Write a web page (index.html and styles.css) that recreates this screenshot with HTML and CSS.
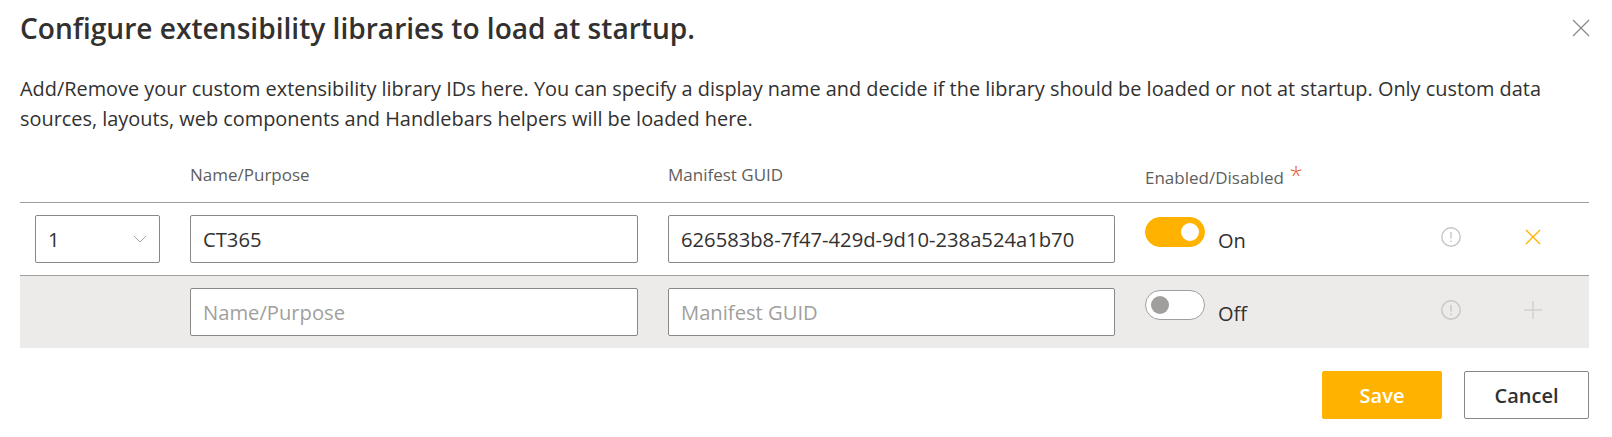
FILE: index.html
```html
<!DOCTYPE html>
<html lang="en">
<head>
    <meta charset="UTF-8">
    <title>Configure extensibility libraries</title>
    <link rel="stylesheet" href="styles.css">
</head>
<body>
    <div class="panel">
        <div class="panel-header">
            <h1>Configure extensibility libraries to load at startup.</h1>
            <button class="close-btn" aria-label="Close">
                <svg width="18" height="18" viewBox="0 0 18 18"><path d="M1 1L17 17M17 1L1 17" class="line-icon"/></svg>
            </button>
        </div>
        <p class="description">Add/Remove your custom extensibility library IDs here. You can specify a display name and decide if the library should be loaded or not at startup. Only custom data sources, layouts, web components and Handlebars helpers will be loaded here.</p>

        <div class="list">
            <div class="row head-row">
                <div></div>
                <div class="col-label">Name/Purpose</div>
                <div class="col-label">Manifest GUID</div>
                <div class="col-label col-label-low">Enabled/Disabled <span class="required">*</span></div>
            </div>

            <div class="row">
                <div class="field order-field">
                    <span>1</span>
                    <svg width="14" height="8" viewBox="0 0 14 8"><path d="M1 1L7 7L13 1" class="chevron"/></svg>
                </div>
                <input class="field" type="text" value="CT365">
                <input class="field" type="text" value="626583b8-7f47-429d-9d10-238a524a1b70">
                <div class="toggle-cell">
                    <span class="toggle on"><span class="knob"></span></span>
                    <span class="toggle-text">On</span>
                </div>
                <svg class="info" width="20" height="20" viewBox="0 0 20 20">
                    <circle cx="10" cy="10" r="9.2"/><path d="M10 5V11.5"/><path d="M10 13.5V15"/>
                </svg>
                <div class="action">
                    <svg width="16" height="16" viewBox="0 0 16 16"><path d="M1 1L15 15M15 1L1 15" class="remove-icon"/></svg>
                </div>
            </div>

            <div class="row new-row">
                <div></div>
                <input class="field" type="text" placeholder="Name/Purpose">
                <input class="field" type="text" placeholder="Manifest GUID">
                <div class="toggle-cell">
                    <span class="toggle"><span class="knob"></span></span>
                    <span class="toggle-text">Off</span>
                </div>
                <svg class="info" width="20" height="20" viewBox="0 0 20 20">
                    <circle cx="10" cy="10" r="9.2"/><path d="M10 5V11.5"/><path d="M10 13.5V15"/>
                </svg>
                <div class="action">
                    <svg width="18" height="18" viewBox="0 0 18 18"><path d="M9 0V18M0 9H18" class="add-icon"/></svg>
                </div>
            </div>
        </div>

        <div class="footer">
            <button class="btn btn-primary">Save</button>
            <button class="btn">Cancel</button>
        </div>
    </div>
</body>
</html>
```

FILE: styles.css
```css
* {
    box-sizing: border-box;
}
body {
    margin: 0;
    font-family: "Open Sans", "Noto Sans", sans-serif;
    color: #323130;
    background: #fff;
}
.panel {
    padding: 0 23px 0 20px;
}
.panel-header {
    display: flex;
    justify-content: space-between;
    align-items: center;
    height: 55px;
}
h1 {
    margin: 0;
    font-size: 28.1px;
    font-weight: 600;
}
.close-btn {
    border: none;
    background: none;
    padding: 0;
    margin-right: -1px;
    display: flex;
}
.line-icon {
    stroke: #8a8886;
    stroke-width: 1.2;
    fill: none;
}
.description {
    margin: 19px 0 0;
    font-size: 19.9px;
    line-height: 30px;
}
.list {
    margin-top: 25px;
}
.row {
    display: grid;
    grid-template-columns: 125px 448px 447px 266px 20px 84px;
    column-gap: 30px;
    padding: 12px 0 12px 15px;
    height: 73px;
    border-bottom: 1px solid #a19f9d;
}
.head-row {
    height: 44px;
    padding: 0 0 0 15px;
    align-items: start;
}
.new-row {
    height: 72px;
    background: #edebe9;
    border-bottom: none;
}
.col-label {
    font-size: 17px;
    color: #605e5c;
    line-height: 24px;
    margin-top: 4px;
}
.col-label-low {
    margin-top: 7px;
}
.required {
    color: #e8603c;
    font-size: 24px;
    font-weight: 300;
    line-height: 10px;
    margin-left: 1px;
}
.field {
    height: 48px;
    width: 100%;
    padding: 0 12px;
    border: 1px solid #8a8886;
    border-radius: 2px;
    background: #fff;
    font-family: inherit;
    font-size: 20.2px;
    color: #323130;
    outline: none;
}
.field::placeholder {
    color: #a19f9d;
    opacity: 1;
}
.order-field {
    display: flex;
    align-items: center;
    justify-content: space-between;
}
.chevron {
    stroke: #a19f9d;
    stroke-width: 1;
    fill: none;
}
.toggle-cell {
    display: flex;
    align-items: flex-start;
    gap: 13px;
    margin-top: 2px;
}
.toggle {
    display: flex;
    align-items: center;
    width: 60px;
    height: 30px;
    padding: 0 5px;
    border: 1px solid #a19f9d;
    border-radius: 15px;
    background: #fff;
}
.toggle.on {
    justify-content: flex-end;
    background: #ffb300;
    border-color: #ffb300;
}
.knob {
    width: 18px;
    height: 18px;
    border-radius: 50%;
    background: #a19f9d;
}
.toggle.on .knob {
    background: #fff;
}
.toggle-text {
    font-size: 20px;
    line-height: 24px;
    margin-top: 12px;
}
.info {
    margin-top: 12px;
    fill: none;
    stroke: #c8c6c4;
    stroke-width: 1.4;
}
.action {
    display: flex;
    justify-content: center;
    padding: 14px 0 0 0;
}
.new-row .action {
    padding-top: 13px;
}
.remove-icon {
    stroke: #ffb300;
    stroke-width: 1.4;
    fill: none;
}
.add-icon {
    stroke: #d2d0ce;
    stroke-width: 1.4;
    fill: none;
}
.footer {
    display: flex;
    justify-content: flex-end;
    gap: 22px;
    margin-top: 23px;
}
.btn {
    height: 48px;
    width: 125px;
    border: 1px solid #8a8886;
    border-radius: 2px;
    background: #fff;
    font-family: inherit;
    font-size: 20px;
    font-weight: 600;
    color: #323130;
}
.btn-primary {
    width: 120px;
    background: #ffb300;
    border-color: #ffb300;
    color: #fff;
}
```
